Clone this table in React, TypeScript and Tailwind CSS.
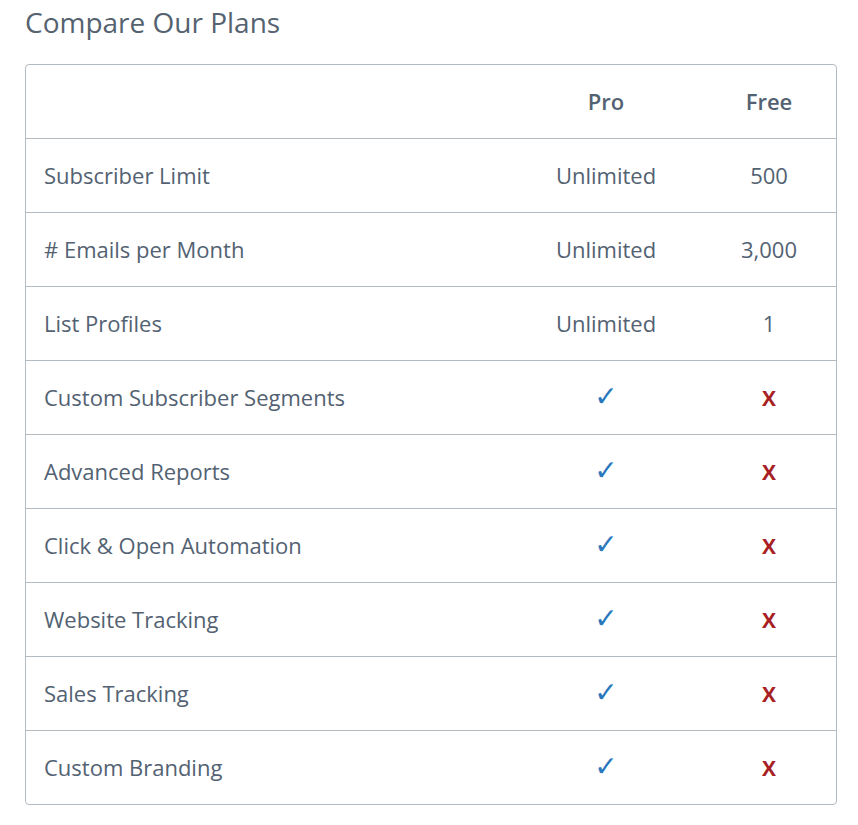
import React from "react";

const rows: [string, string, string][] = [
  ["Subscriber Limit", "Unlimited", "500"],
  ["# Emails per Month", "Unlimited", "3,000"],
  ["List Profiles", "Unlimited", "1"],
  ["Custom Subscriber Segments", "check", "x"],
  ["Advanced Reports", "check", "x"],
  ["Click & Open Automation", "check", "x"],
  ["Website Tracking", "check", "x"],
  ["Sales Tracking", "check", "x"],
  ["Custom Branding", "check", "x"],
];

function Cell({ v }: { v: string }) {
  if (v === "check") return <span className="text-[#2a79bd] text-[28px] leading-none" style={{ fontFamily: "'DejaVu Sans', sans-serif" }}>✓</span>;
  if (v === "x") return <span className="text-[#a81f24] font-bold text-[21px]">X</span>;
  return <span>{v}</span>;
}

export default function App() {
  return (
    <div className="bg-white min-h-[825px] pl-[25px] pr-[21px] text-[#536272]" style={{ fontFamily: "'Open Sans', 'Noto Sans', sans-serif" }}>
      <h1 className="text-[28px] leading-[44px] text-[#55626f]">Compare Our Plans</h1>
      <div className="mt-[20px] border border-[#b3bbc2] rounded-[4px] text-[22px]">
        <div className="grid grid-cols-[1fr_192px_134px] h-[73px] items-center font-semibold">
          <div />
          <div className="text-center">Pro</div>
          <div className="text-center">Free</div>
        </div>
        {rows.map((r) => (
          <div key={r[0]} className="grid grid-cols-[1fr_192px_134px] h-[74px] items-center border-t border-[#b3bbc2]">
            <div className="pl-[18px]">{r[0]}</div>
            <div className="text-center"><Cell v={r[1]} /></div>
            <div className="text-center"><Cell v={r[2]} /></div>
          </div>
        ))}
      </div>
    </div>
  );
}
